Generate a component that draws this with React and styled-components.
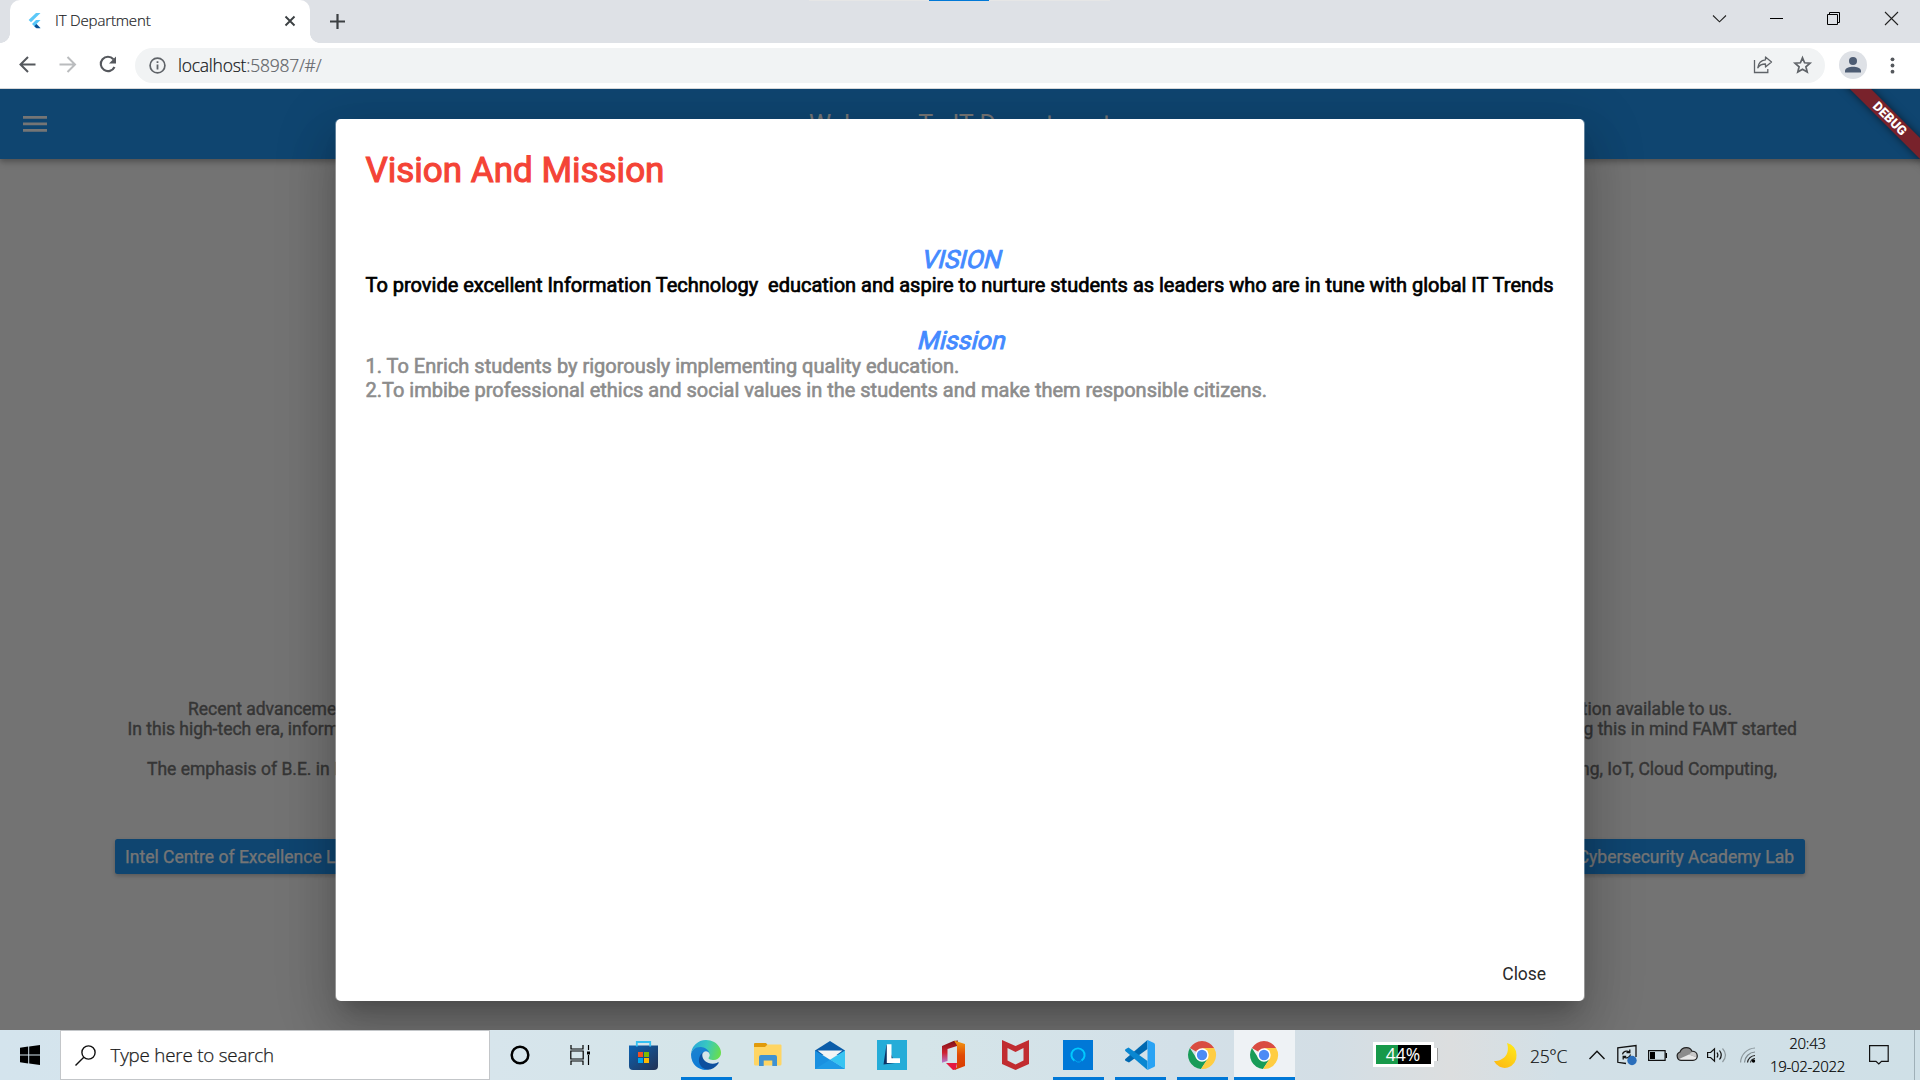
import React from "react";
import styled, { createGlobalStyle } from "styled-components";

const Global = createGlobalStyle`
  * { box-sizing: border-box; }
  body { margin: 0; background: #fff; overflow: hidden; }
  svg { display: block; flex: none; overflow: visible; }
`;

const UI = `"Open Sans", "Noto Sans", sans-serif`;
const MATERIAL = `Roboto, "Liberation Sans", sans-serif`;

const Screen = styled.div`
  width: 1920px;
  height: 1080px;
  display: flex;
  flex-direction: column;
  overflow: hidden;
  font-family: ${UI};
  white-space: pre;
`;

/* ---------- browser chrome ---------- */

const TabStrip = styled.header`
  position: relative;
  height: 43px;
  flex: none;
  display: flex;
  padding-left: 10px;
  background: #dee1e6;
`;

const TopHint = styled.div`
  position: absolute;
  top: 0;
  left: 809px;
  width: 301px;
  height: 1px;
  padding-left: 120px;
  background: #e6e6e6;
  display: flex;
  &::after {
    content: "";
    width: 60px;
    background: #0078d7;
  }
`;

const Tab = styled.div`
  position: relative;
  width: 300px;
  height: 43px;
  display: flex;
  align-items: center;
  padding: 0 15px 1px 18px;
  background: #fff;
  border-radius: 10px 10px 0 0;
  &::before,
  &::after {
    content: "";
    position: absolute;
    bottom: 0;
    width: 10px;
    height: 10px;
  }
  &::before {
    left: -10px;
    background: radial-gradient(circle at 0 0, transparent 9.6px, #fff 10.2px);
  }
  &::after {
    right: -10px;
    background: radial-gradient(circle at 100% 0, transparent 9.6px, #fff 10.2px);
  }
`;

const TabTitle = styled.span`
  flex: 1;
  margin-left: 14px;
  padding-bottom: 2px;
  font-size: 15px;
  font-weight: 300;
  line-height: 20px;
  letter-spacing: -0.15px;
  color: #202124;
  -webkit-text-stroke: 0.2px #202124;
`;

const NewTab = styled.div`
  width: 15px;
  margin: 14px 0 0 20px;
`;

const WindowControls = styled.div`
  display: flex;
  align-items: flex-start;
  gap: 44px;
  margin: 12px 22px 0 auto;
  svg:last-child {
    margin-left: 1px;
  }
`;

const Toolbar = styled.div`
  height: 46px;
  flex: none;
  display: flex;
  align-items: center;
  padding: 0 22px 1px 18px;
  background: #fff;
  border-bottom: 1px solid #d6d7d9;
`;

const NavButtons = styled.div`
  display: flex;
  gap: 20px;
  width: 117px;
  flex: none;
`;

const Omnibox = styled.div`
  width: 1690px;
  height: 35px;
  display: flex;
  align-items: center;
  padding: 0 13px 0 14px;
  border-radius: 18px;
  background: #f1f3f4;
`;

const Url = styled.span`
  flex: 1;
  margin-left: 12px;
  padding-bottom: 1px;
  font-size: 17.5px;
  font-weight: 300;
  line-height: 24px;
  letter-spacing: -0.24px;
  color: #5f6368;
  -webkit-text-stroke: 0.2px;
  b {
    font-weight: 300;
    color: #111316;
  }
`;

const OmniActions = styled.div`
  display: flex;
  align-items: center;
  gap: 20px;
`;

const Avatar = styled.div`
  width: 28px;
  height: 28px;
  margin: 0 24px 0 14px;
  flex: none;
  border-radius: 50%;
  background: #dee1e6;
`;

/* ---------- application page ---------- */

const Viewport = styled.main`
  position: relative;
  height: 941px;
  flex: none;
  display: flex;
  flex-direction: column;
  overflow: hidden;
  background: #fafafa;
  font-family: ${MATERIAL};
`;

const AppBar = styled.div`
  position: relative;
  height: 70px;
  flex: none;
  display: grid;
  grid-template-columns: 70px 1fr 70px;
  align-items: center;
  background: #2196f3;
  box-shadow: 0 2px 5px rgba(0, 0, 0, 0.22), 0 5px 6px rgba(0, 0, 0, 0.1);
`;

const MenuButton = styled.div`
  padding-left: 23px;
`;

const AppTitle = styled.h1`
  margin: 0;
  text-align: center;
  font-size: 25px;
  line-height: 29px;
  font-weight: 400;
  letter-spacing: -0.02px;
  color: #fff;
`;

const Page = styled.div`
  flex: 1;
  padding: 540px 115px 0;
`;

const SplitLine = styled.div`
  display: flex;
  justify-content: space-between;
  height: 20px;
  padding: 0 ${(p) => p.$right}px 0 ${(p) => p.$left}px;
  font-size: 17.5px;
  line-height: 20px;
  color: #757575;
  -webkit-text-stroke: 0.4px #757575;
`;

const ButtonRow = styled.div`
  display: flex;
  justify-content: space-between;
  margin-top: 60px;
`;

const RaisedButton = styled.div`
  height: 35px;
  padding: 0 11px 0 10px;
  border-radius: 2.5px;
  background: #2196f3;
  color: #fff;
  font-size: 17.5px;
  line-height: 37px;
  -webkit-text-stroke: 0.25px #fff;
  box-shadow: 0 2px 4px rgba(0, 0, 0, 0.22);
`;

const Scrim = styled.div`
  position: absolute;
  inset: 0;
  display: flex;
  justify-content: center;
  padding: 30px 0 29px;
  background: rgba(0, 0, 0, 0.54);
`;

const Dialog = styled.section`
  width: 1248px;
  display: flex;
  flex-direction: column;
  padding: 31px 30px 9px 29.5px;
  border-radius: 5px;
  background: #fff;
  box-shadow: -1px 0 0 rgba(255, 255, 255, 0.35), 1px 0 0 rgba(255, 255, 255, 0.35),
    0 14px 19px -9px rgba(0, 0, 0, 0.2), 0 30px 48px 4px rgba(0, 0, 0, 0.14),
    0 11px 58px 10px rgba(0, 0, 0, 0.12);
`;

const DialogTitle = styled.h2`
  margin: 0 0 55px;
  font-size: 35px;
  font-weight: 400;
  line-height: 41px;
  color: #f44336;
  -webkit-text-stroke: 1.1px #f44336;
`;

const Heading = styled.h3`
  margin: 0;
  text-align: center;
  font-size: 25px;
  font-weight: 400;
  line-height: 28px;
  color: #448aff;
  -webkit-text-stroke: 0.9px #448aff;
  transform: skewX(-14deg);
  transform-origin: 50% 82%;
`;

const Body = styled.p`
  margin: -1px 0 ${(p) => p.$gap || 1}px;
  font-size: 20px;
  line-height: 24px;
  letter-spacing: -0.008px;
  color: ${(p) => p.$color};
  -webkit-text-stroke: ${(p) => p.$bold}px ${(p) => p.$color};
`;

const Actions = styled.div`
  display: flex;
  justify-content: flex-end;
  margin-top: auto;
`;

const TextButton = styled.button`
  height: 35px;
  padding: 0 8px;
  border: 0;
  background: none;
  font: 400 17.5px/35px ${MATERIAL};
  letter-spacing: -0.05px;
  color: #2a2a2a;
`;

const DebugBanner = styled.div`
  position: absolute;
  top: 21.8px;
  right: -40px;
  width: 140px;
  height: 15px;
  transform: rotate(45deg);
  background: #78222b;
  box-shadow: 0 0 8px rgba(0, 0, 0, 0.55);
  color: #fff;
  text-align: center;
  font-size: 13px;
  font-weight: 900;
  line-height: 15px;
`;

/* ---------- taskbar ---------- */

const Taskbar = styled.footer`
  height: 50px;
  flex: none;
  display: flex;
  background: linear-gradient(90deg, #d4e4ed 0, #d7e5ec 490px, #d5e5e9 700px,
    #d5e5e9 920px, #d3e0e8 1180px, #d3dee5 1330px, #dcdedf 1450px, #d2e0e7 1560px, #cfe0e7 100%);
`;

const StartButton = styled.div`
  width: 60px;
  padding: 15px 0 0 20px;
`;

const SearchBox = styled.div`
  width: 430px;
  height: 50px;
  display: flex;
  align-items: center;
  padding-left: 14px;
  background: #fff;
  border: 1px solid #c3c6c9;
`;

const SearchText = styled.span`
  margin-left: 14.5px;
  padding-bottom: 1px;
  font-size: 18.75px;
  line-height: 26px;
  font-weight: 300;
  letter-spacing: -0.19px;
  color: #1c1c1c;
  -webkit-text-stroke: 0.25px #1c1c1c;
`;

const ShellButton = styled.div`
  width: ${(p) => p.$w}px;
  display: flex;
  align-items: center;
  justify-content: center;
`;

const AppButton = styled.div`
  width: 62px;
  height: 50px;
  padding: ${(p) => (p.$active ? "0 0 0 1px" : "0 5px 0 6px")};
`;

const AppFace = styled.div`
  height: 50px;
  display: flex;
  justify-content: center;
  padding: 10px 2px 0 0;
  background: ${(p) => (p.$active ? "#eef2f5" : "transparent")};
  border-bottom: 3px solid ${(p) => (p.$running ? "#0078d7" : "transparent")};
`;

const Battery = styled.div`
  display: flex;
  align-items: center;
  margin: 12px 0 0 78px;
  height: 25px;
  &::after {
    content: "";
    width: 3px;
    height: 13px;
    background: #fff;
    border-right: 1px solid #999;
  }
`;

const BatteryLevel = styled.div`
  width: 61px;
  height: 25px;
  padding-right: 1px;
  border: 3px solid #fff;
  background: linear-gradient(90deg, #17994a 22px, #000 22px) padding-box;
  color: #fff;
  text-align: center;
  font-size: 17.5px;
  line-height: 19px;
`;

const Tray = styled.div`
  flex: 1;
  display: flex;
  align-items: flex-start;
`;

const TrayItem = styled.div`
  margin: ${(p) => p.$top}px 0 0 ${(p) => p.$gap}px;
`;

const Temperature = styled.span`
  width: 38px;
  margin: 14px 0 0 13px;
  font-size: 17.5px;
  line-height: 24px;
  letter-spacing: -0.35px;
  font-weight: 300;
  color: #111;
  -webkit-text-stroke: 0.2px #111;
`;

const Clock = styled.div`
  width: 80px;
  margin: 2px 0 0 12.5px;
  text-align: center;
  font-size: 15px;
  line-height: 23px;
  letter-spacing: -0.3px;
  font-weight: 300;
  color: #000;
  -webkit-text-stroke: 0.2px #000;
`;

const ShowDesktop = styled.div`
  width: 6px;
  height: 50px;
  margin-left: auto;
  border-left: 1px solid #9fb0b8;
`;

/* ---------- icons ---------- */

const ChromeIcon = () => (
  <svg width="28" height="28" viewBox="0 0 28 28">
    <path d="M14 14 L1.9 7 A14 14 0 0 1 26.1 7 L14 7.5Z" fill="#d94c41" />
    <path d="M1.9 7 A14 14 0 0 0 13 28 L19.6 18 L14 14 L8 16.5Z" fill="#189c58" />
    <path d="M26.1 7 A14 14 0 0 1 13 28 L19.8 17.5 L19.5 10 L14 7.2 L26.1 7Z" fill="#ffcd42" />
    <circle cx="14" cy="14" r="6.7" fill="#fff" />
    <circle cx="14" cy="14" r="5.2" fill="#4c8bf5" />
  </svg>
);

const StoreIcon = () => (
  <svg width="29" height="30" viewBox="0 0 29 30">
    <defs>
      <linearGradient id="store" x1="0" y1="0" x2="1" y2="1">
        <stop offset="0" stopColor="#0b62b3" />
        <stop offset="1" stopColor="#243253" />
      </linearGradient>
    </defs>
    <path d="M0 5.5h29V26a4 4 0 0 1-4 4H4a4 4 0 0 1-4-4Z" fill="url(#store)" />
    <path d="M7.8 6.5V2h13.4v4.5" fill="none" stroke="#35c0f2" strokeWidth="1.8" />
    <path d="M9 12h5v5H9z" fill="#f25022" />
    <path d="M15 12h5v5h-5z" fill="#7fba00" />
    <path d="M9 18h5v5H9z" fill="#00a4ef" />
    <path d="M15 18h5v5h-5z" fill="#ffb900" />
  </svg>
);

const EdgeIcon = () => (
  <svg width="30" height="30" viewBox="0 0 256 256">
    <defs>
      <linearGradient id="edgeTop" x1="0" y1="0.3" x2="1" y2="0.5">
        <stop offset="0" stopColor="#2aa7dc" />
        <stop offset="0.5" stopColor="#38c7c0" />
        <stop offset="1" stopColor="#68de4e" />
      </linearGradient>
      <linearGradient id="edgeLeft" x1="0.2" y1="0" x2="0.6" y2="1">
        <stop offset="0" stopColor="#1c83cf" />
        <stop offset="1" stopColor="#0b7ad8" />
      </linearGradient>
    </defs>
    <path d="M231 190.500c-3.400 1.800-6.900 3.400-10.500 4.700a101 101 0 0 1-35.900 6.500c-47.300 0-88.500-32.500-88.500-74.300.1-11.400 6.400-21.900 16.400-27.300-42.800 1.800-53.800 46.400-53.800 72.500 0 73.900 68.100 81.400 82.800 81.400 7.900 0 19.800-2.300 27-4.600l1.300-.4a128 128 0 0 0 66.600-52.800 4 4 0 0 0-5.400-5.700z" fill="#0d4f9e" />
    <path d="M105.700 241.400a79 79 0 0 1-22.700-21.300 80.700 80.700 0 0 1 29.500-120c3.200-1.500 8.500-4.100 15.600-4a32.400 32.400 0 0 1 25.700 13 31.900 31.900 0 0 1 6.300 18.700c0-.2 24.500-79.600-80-79.600-43.900 0-80 41.700-80 78.200a130 130 0 0 0 12.100 56 128 128 0 0 0 156.400 67.100 75.500 75.500 0 0 1-62.800-8z" fill="url(#edgeLeft)" />
    <path d="M152.300 148.900c-.9 1-3.400 2.500-3.400 5.600 0 2.600 1.700 5.200 4.800 7.300 14.300 10 41.400 8.600 41.500 8.600 10.700 0 21.100-2.900 30.300-8.300A61.400 61.400 0 0 0 256 109.100c.3-22.400-8-37.300-11.300-43.900C223.500 23.900 177.700 0 128 0A128 128 0 0 0 0 126.200c.5-36.500 36.800-66 80-66 3.500 0 23.500.3 42 10a72.600 72.600 0 0 1 30.900 29.300c6.100 10.600 7.200 24.100 7.200 29.500 0 5.300-2.700 13.300-7.800 19.900z" fill="url(#edgeTop)" />
  </svg>
);

const FolderIcon = () => (
  <svg width="28" height="24" viewBox="0 0 28 24">
    <path d="M0 1a1 1 0 0 1 1-1h11l2 2.500V6H0Z" fill="#e19a0a" />
    <path d="M0 4h11l2.500-2.500H26.500a1 1 0 0 1 1 1V21a1.500 1.500 0 0 1-1.500 1.500H1.500A1.500 1.500 0 0 1 0 21Z" fill="#ffd563" />
    <path d="M5 23V14a2 2 0 0 1 2-2h14a2 2 0 0 1 2 2v9h-4.700v-5.500h-8.600V23Z" fill="#3f92d2" />
  </svg>
);

const MailIcon = () => (
  <svg width="30" height="28" viewBox="0 0 30 28">
    <path d="M0 9.500 15 0 30 9.500V14H0Z" fill="#0a5ca8" />
    <path d="M2.500 9.500h25L15 19Z" fill="#f3f4f5" />
    <path d="M0 9.500 30 28H0Z" fill="#1a90e0" />
    <path d="M30 9.500V28L15 18.700Z" fill="#38c4f2" />
    <path d="M15 18.700 30 28H0Z" fill="#1f9ae6" />
  </svg>
);

const LIcon = () => (
  <svg width="30" height="30" viewBox="0 0 30 30">
    <path d="M0 0h30v30H0z" fill="#25acd8" />
    <path d="M9.500 4.500 6.500 24.500 18 23Z" fill="#0b3467" />
    <path d="M9.800 4.200h4.700v14h8.500V23H9.800Z" fill="#fff" />
  </svg>
);

const OfficeIcon = () => (
  <svg width="23" height="30" viewBox="0 0 23 30">
    <defs>
      <linearGradient id="officeL" x1="0" y1="0" x2="0" y2="1">
        <stop offset="0" stopColor="#7c1016" />
        <stop offset="0.55" stopColor="#cf2330" />
        <stop offset="1" stopColor="#b77ad0" />
      </linearGradient>
      <linearGradient id="officeR" x1="0" y1="0" x2="0" y2="1">
        <stop offset="0" stopColor="#f39a12" />
        <stop offset="0.5" stopColor="#e04a06" />
        <stop offset="1" stopColor="#d83b01" />
      </linearGradient>
    </defs>
    <path d="M0 6 11.500 1 16 .5 15 6 5.500 9V21L0 22.800Z" fill="url(#officeL)" />
    <path d="M4 23h11l-1 6.500-3 .5Z" fill="#e5173f" />
    <path d="M12 .5 23 4V26L12.500 30 15 27V5.500Z" fill="url(#officeR)" />
  </svg>
);

const ShieldIcon = () => (
  <svg width="27" height="30" viewBox="0 0 27 30">
    <path d="M0 0 13.500 6 27 0V24L13.500 30 0 24Z M5.500 8V20.500L13.500 24.500 21.500 20.500V8L13.500 12Z" fill="#c12c30" fillRule="evenodd" />
  </svg>
);

const AlexaIcon = () => (
  <svg width="30" height="30" viewBox="0 0 30 30">
    <path d="M0 0h30v30H0z" fill="#0078d7" />
    <path d="M11.500 20.600A6.600 6.600 0 1 1 18.500 20.600" fill="none" stroke="#00caff" strokeWidth="1.900" />
    <path d="M11.500 20 14.500 22h2l2.500-2" fill="none" stroke="#00a8f0" strokeWidth="1" />
  </svg>
);

const CodeIcon = () => (
  <svg width="30" height="30" viewBox="0 0 30 30">
    <path d="M22.500 0V9L4 22.600.8 21c-1-.6-1-1.600-.2-2.300Z" fill="#0068b0" />
    <path d="M.6 11.300c-.8-.7-.8-1.700.2-2.300L3.500 7.400 22.500 21v9Z" fill="#0a87d1" />
    <path d="M22.500 0 29 3c.7.400 1 .9 1 1.600V25.400c0 .7-.3 1.200-1 1.600L22.500 30Z" fill="#2aa3f4" />
  </svg>
);

const Lowered = styled.div`
  margin-top: ${(p) => p.$by || 0}px;
`;

const apps = [
  { id: "store", Icon: StoreIcon },
  { id: "edge", Icon: EdgeIcon, running: true },
  { id: "files", Icon: FolderIcon, drop: 3 },
  { id: "mail", Icon: MailIcon, drop: 1 },
  { id: "l", Icon: LIcon },
  { id: "office", Icon: OfficeIcon },
  { id: "shield", Icon: ShieldIcon },
  { id: "alexa", Icon: AlexaIcon, running: true },
  { id: "code", Icon: CodeIcon, running: true },
  { id: "chrome", Icon: ChromeIcon, drop: 1, running: true },
  { id: "chrome-active", Icon: ChromeIcon, drop: 1, running: true, active: true },
];

function BrowserChrome() {
  return (
    <>
      <TabStrip>
        <TopHint />
        <Tab>
          <svg width="13" height="16" viewBox="0 0 13 16">
            <path d="M8 0h4.500L3 9.300.6 7Z" fill="#5cc8f8" />
            <path d="M8 7h4.500L8.500 11l4 4H8l-4-4Z" fill="#54c5f8" />
            <path d="M6.300 13.200 8.500 11l4 4.300H8.500Z" fill="#0a4f94" />
          </svg>
          <TabTitle>IT Department</TabTitle>
          <svg width="10" height="10" viewBox="0 0 10 10">
            <path d="M.5.500 9.500 9.500M9.500.5.500 9.500" stroke="#3c4043" strokeWidth="1.900" />
          </svg>
        </Tab>
        <NewTab>
          <svg width="15" height="15" viewBox="0 0 15 15">
            <path d="M7.500 0v15M0 7.500h15" stroke="#3c4043" strokeWidth="2.200" />
          </svg>
        </NewTab>
        <WindowControls>
          <svg width="13" height="13" viewBox="0 0 13 13" fill="none" stroke="#222" strokeWidth="1.100">
            <path d="M0 3.500 6.500 9.800 13 3.500" />
          </svg>
          <svg width="13" height="13" viewBox="0 0 13 13">
            <path d="M0 6h13v1H0z" />
          </svg>
          <svg width="13" height="13" viewBox="0 0 13 13" fill="none" stroke="#000">
            <path d="M.5 2.500h10v10H.500ZM2.500 2.500V.500h10v10H10.500" />
          </svg>
          <svg width="13" height="13" viewBox="0 0 13 13" fill="none" stroke="#222" strokeWidth="1.100">
            <path d="M0 0 13 13M13 0 0 13" />
          </svg>
        </WindowControls>
      </TabStrip>
      <Toolbar>
        <NavButtons>
          <svg width="20" height="20" viewBox="0 0 20 20" fill="none" stroke="#55585d" strokeWidth="2">
            <path d="M17.500 9.500H3M10 2 2.500 9.500 10 17" />
          </svg>
          <svg width="20" height="20" viewBox="0 0 20 20" fill="none" stroke="#babcbe" strokeWidth="2">
            <path d="M1.500 9.500H16.500M9.500 2 17 9.500 9.500 17" />
          </svg>
          <svg width="20" height="20" viewBox="0 0 20 20">
            <path d="M15.400 4.200A7.200 7.200 0 1 0 16.500 12" fill="none" stroke="#55585d" strokeWidth="2.100" />
            <path d="M18 1.500V8.500H11Z" fill="#55585d" />
          </svg>
        </NavButtons>
        <Omnibox>
          <svg width="17" height="17" viewBox="0 0 17 17">
            <circle cx="8.500" cy="8.500" r="7.400" fill="none" stroke="#5f6368" strokeWidth="1.700" />
            <path d="M7.600 7.500h1.800v5H7.600zM7.600 4.300h1.800v1.800H7.600z" fill="#5f6368" />
          </svg>
          <Url>
            <b>localhost</b>:58987/#/
          </Url>
          <OmniActions>
            <svg width="20" height="18" viewBox="0 0 20 18" fill="none" stroke="#5f6368" strokeWidth="1.300">
              <path d="M1.500 4v12.500h13.300v-3.500" />
              <path d="M12.500 1 18.500 6l-6 5V8C9 8 6.500 9 4.800 11.800 5.300 7.300 8 4.300 12.500 3.800Z" strokeLinejoin="round" />
            </svg>
            <svg width="19" height="18" viewBox="0 0 19 18" fill="none" stroke="#5f6368" strokeWidth="1.700">
              <path d="M9.500 1.800 11.600 6.800 17 7.200 12.900 10.800 14.200 16.100 9.500 13.300 4.800 16.100 6.100 10.800 2 7.200 7.400 6.800Z" />
            </svg>
          </OmniActions>
        </Omnibox>
        <Avatar>
          <svg width="28" height="28" viewBox="0 0 28 28" fill="#4d5c73">
            <circle cx="14" cy="10" r="4" />
            <path d="M6 21.500V20c0-3 4.500-4.300 8-4.300s8 1.300 8 4.300v1.500Z" />
          </svg>
        </Avatar>
        <svg width="4" height="17" viewBox="0 0 4 17" fill="#55585d">
          <circle cx="1.500" cy="2.300" r="1.900" />
          <circle cx="1.500" cy="8.500" r="1.900" />
          <circle cx="1.500" cy="14.700" r="1.900" />
        </svg>
      </Toolbar>
    </>
  );
}

function DepartmentApp() {
  return (
    <Viewport>
      <AppBar>
        <MenuButton>
          <svg width="24" height="16" viewBox="0 0 24 16" fill="#fff">
            <path d="M0 0h24v2.700H0zM0 6.500h24v2.700H0zM0 13h24v2.700H0z" />
          </svg>
        </MenuButton>
        <AppTitle>Welcome To IT Department</AppTitle>
      </AppBar>
      <Page>
        <SplitLine $left={73} $right={73}>
          <span>Recent advancement</span>
          <span>information available to us.</span>
        </SplitLine>
        <SplitLine $left={12.5} $right={8}>
          <span>In this high-tech era, information</span>
          <span>keeping this in mind FAMT started</span>
        </SplitLine>
        <SplitLine />
        <SplitLine $left={32} $right={28}>
          <span>The emphasis of B.E. in Information</span>
          <span>Learning, IoT, Cloud Computing,</span>
        </SplitLine>
        <ButtonRow>
          <RaisedButton>Intel Centre of Excellence Lab</RaisedButton>
          <RaisedButton>Cybersecurity Academy Lab</RaisedButton>
        </ButtonRow>
      </Page>
      <Scrim>
        <Dialog>
          <DialogTitle>Vision And Mission</DialogTitle>
          <Heading>VISION</Heading>
          <Body $color="#000" $bold={0.7} $gap={30}>
            {"To provide excellent Information Technology  education and aspire to nurture students as leaders who are in tune with global IT Trends"}
          </Body>
          <Heading>Mission</Heading>
          <Body $color="#8c8c8c" $bold={0.6}>
            1. To Enrich students by rigorously implementing quality education.
          </Body>
          <Body $color="#8c8c8c" $bold={0.6}>
            2.To imbibe professional ethics and social values in the students and make them responsible citizens.
          </Body>
          <Actions>
            <TextButton>Close</TextButton>
          </Actions>
        </Dialog>
      </Scrim>
      <DebugBanner>DEBUG</DebugBanner>
    </Viewport>
  );
}

function WindowsTaskbar() {
  return (
    <Taskbar>
      <StartButton>
        <svg width="20" height="20" viewBox="0 0 20 20">
          <path d="M0 2.800 8.200 1.600V9.500H0ZM9.200 1.500 20 0V9.500H9.200ZM0 10.500H8.200V18.400L0 17.200ZM9.200 10.500H20V20L9.200 18.500Z" />
        </svg>
      </StartButton>
      <SearchBox>
        <svg width="21" height="21" viewBox="0 0 21 21" fill="none" stroke="#111" strokeWidth="1.400">
          <circle cx="13.500" cy="7.500" r="6.600" />
          <path d="M8.800 12.200.5 20.500" />
        </svg>
        <SearchText>Type here to search</SearchText>
      </SearchBox>
      <ShellButton $w={60}>
        <svg width="20" height="20" viewBox="0 0 20 20">
          <circle cx="10" cy="10" r="8.300" fill="none" stroke="#000" strokeWidth="2.500" />
        </svg>
      </ShellButton>
      <ShellButton $w={63}>
        <svg width="23" height="20" viewBox="0 0 23 20" fill="none" stroke="#000" strokeWidth="1.200">
          <path d="M1 0v4h12V0M1 20v-4h12v4M.8 6h12.400v8H.8zM18.500 0v5M18.500 10v10" />
          <path d="M17 6.500h3v3h-3z" fill="#000" stroke="none" />
        </svg>
      </ShellButton>
      {apps.map(({ id, Icon, drop, running, active }) => (
        <AppButton key={id} $active={active}>
          <AppFace $running={running} $active={active}>
            <Lowered $by={drop}>
              <Icon />
            </Lowered>
          </AppFace>
        </AppButton>
      ))}
      <Battery>
        <BatteryLevel>44%</BatteryLevel>
      </Battery>
      <Tray>
        <TrayItem $top={13} $gap={56}>
          <svg width="23" height="24" viewBox="0 0 23 24">
            <defs>
              <linearGradient id="moon" x1="0.8" y1="0" x2="0.2" y2="1">
                <stop offset="0" stopColor="#ffe81a" />
                <stop offset="1" stopColor="#fdb913" />
              </linearGradient>
            </defs>
            <path d="M13 0A12 12 0 0 1 22.500 12 11.800 11.800 0 0 1 0 18C7 18.500 17 13 13 0Z" fill="url(#moon)" />
          </svg>
        </TrayItem>
        <Temperature>25°C</Temperature>
        <TrayItem $top={20} $gap={21}>
          <svg width="16" height="10" viewBox="0 0 16 10" fill="none" stroke="#111" strokeWidth="1.400">
            <path d="M.5 9 8 1.300 15.500 9" />
          </svg>
        </TrayItem>
        <TrayItem $top={15} $gap={12}>
          <svg width="21" height="21" viewBox="0 0 21 21" fill="none" stroke="#111" strokeWidth="1.300">
            <path d="M9 18.500.8 17.300V2.800L19 .6V12" />
            <path d="M5.500 9.300C6 6.500 9.500 5 12.500 7.300M12.800 4.500v3.200H9.500M13.500 9.500C13 12.500 9 14 6.500 11.800M6.200 14.500v-3.200h3" />
            <circle cx="15" cy="15.500" r="4.700" fill="#2a6ebb" stroke="none" />
          </svg>
        </TrayItem>
        <TrayItem $top={20} $gap={10}>
          <svg width="20" height="11" viewBox="0 0 20 11">
            <path d="M.6.600h16.500v9.800H.600Z" fill="none" stroke="#111" strokeWidth="1.200" />
            <path d="M2 2h5v7H2zM17.600 3h1.400v5h-1.400z" />
          </svg>
        </TrayItem>
        <TrayItem $top={17} $gap={9}>
          <svg width="21" height="14" viewBox="0 0 21 14">
            <path d="M5 13.300A4.300 4.300 0 0 1 3 5C4 2 6.500.7 9.500.700 12 .7 14 2 15 4.200 18 4.200 20.300 6.200 20.300 9 20.300 11.500 18.500 13.300 16 13.300Z" fill="#8c8c8c" />
            <path d="M5 13.300 2 12 12 7.500 20 10.500C19.500 12.300 18 13.300 16 13.300Z" fill="#e8e8e8" />
            <path d="M12 7.500 15.500 4.500C18 4.500 20 6.500 20 10.500Z" fill="#c9c9c9" />
            <path d="M5 13.300A4.300 4.300 0 0 1 3 5C4 2 6.500.7 9.500.700 12 .7 14 2 15 4.200 18 4.200 20.300 6.200 20.300 9 20.300 11.500 18.500 13.300 16 13.300Z" fill="none" stroke="#222" strokeWidth="1.200" />
          </svg>
        </TrayItem>
        <TrayItem $top={17} $gap={9}>
          <svg width="21" height="16" viewBox="0 0 21 16" fill="none" stroke="#111" strokeWidth="1.200">
            <path d="M.6 5.500h3L7.500 1.800V14.200L3.600 10.500h-3Z" />
            <path d="M10 5.500Q11.800 8 10 10.500M12.500 3.500Q16 8 12.500 12.500" />
            <path d="M15.500 1.500Q21.500 8 15.500 15" stroke="#8d989d" />
          </svg>
        </TrayItem>
        <TrayItem $top={17} $gap={12}>
          <svg width="15" height="16" viewBox="0 0 15 16" fill="none" strokeWidth="1.200">
            <path d="M.6 15.500A15 15 0 0 1 15 1" stroke="#8d989d" />
            <path d="M4.500 15.500A11 11 0 0 1 15 5" stroke="#7d888d" />
            <path d="M7.500 15.500A8 8 0 0 1 15 8.500M10.500 15.500A5 5 0 0 1 15 11.500" stroke="#222" />
            <circle cx="13.500" cy="14" r="1.700" fill="#000" />
          </svg>
        </TrayItem>
        <Clock>
          20:43
          <br />
          19-02-2022
        </Clock>
        <TrayItem $top={15} $gap={21.5}>
          <svg width="20" height="20" viewBox="0 0 20 20" fill="none" stroke="#111" strokeWidth="1.200">
            <path d="M.6.600h18.600v15.800H12.500L9.800 19 7 16.400H.600Z" />
          </svg>
        </TrayItem>
        <ShowDesktop />
      </Tray>
    </Taskbar>
  );
}

export default function App() {
  return (
    <Screen>
      <Global />
      <BrowserChrome />
      <DepartmentApp />
      <WindowsTaskbar />
    </Screen>
  );
}
